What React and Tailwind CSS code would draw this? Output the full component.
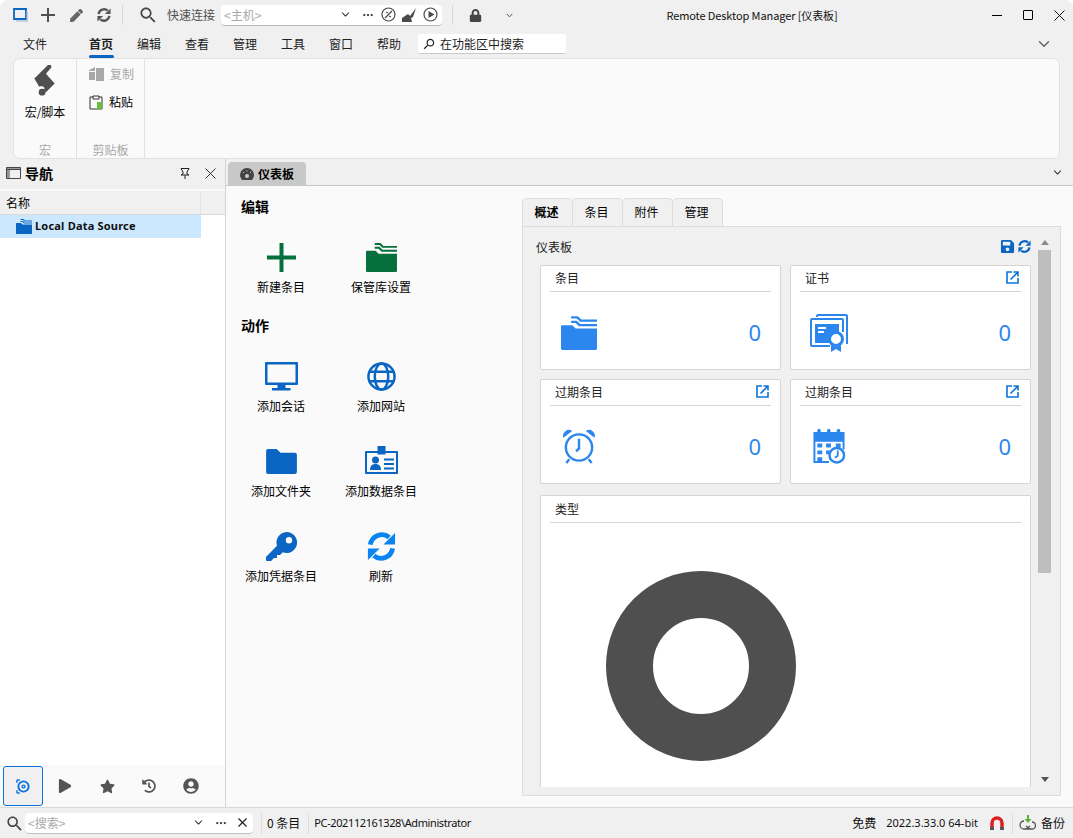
import { FaStar, FaPlay, FaUserCircle, FaHistory, FaLock, FaSave, FaPen } from "react-icons/fa";
import { IoMdSearch } from "react-icons/io";
import { IoChevronDown, IoEllipsisHorizontal } from "react-icons/io5";

const font = "font-['Noto_Sans_CJK_SC','Noto_Sans',sans-serif]";

function VaultFolder({ className }) {
  return (
    <svg viewBox="0 0 32 30" className={className} fill="currentColor">
      <path d="M9 0h6l3 3h14v2H17l-3-3H9z" />
      <path d="M9 4h5l3 3h15v2H16l-3-3H9z" />
      <path d="M1 8h9l3 3h19v18a1 1 0 0 1-1 1H1a1 1 0 0 1-1-1V9a1 1 0 0 1 1-1z" />
    </svg>
  );
}

function RefreshIcon({ className }) {
  return (
    <svg viewBox="0 0 30 30" className={className} fill="currentColor">
      <path d="M3.500 13A12 12 0 0 1 23 5.500" fill="none" stroke="currentColor" strokeWidth="5" />
      <path d="M29 1v12H17z" />
      <path d="M26.500 17A12 12 0 0 1 7 24.500" fill="none" stroke="currentColor" strokeWidth="5" />
      <path d="M1 29V17h12z" />
    </svg>
  );
}

function KeyIcon() {
  return (
    <svg viewBox="0 0 31 29" className="w-[31px] h-[29px] text-[#0a66c2]" fill="currentColor">
      <path
        d="M20.500 0a10.500 10.500 0 1 1-3.700 20.300L14 23h-3v3H8l-3 3H1a1 1 0 0 1-1-1v-3l11-11.300A10.500 10.500 0 0 1 20.500 0zm2.500 5a3.200 3.200 0 1 0 0 6.400A3.200 3.200 0 0 0 23 5z"
        fillRule="evenodd"
      />
    </svg>
  );
}

function Monitor() {
  return (
    <svg viewBox="0 0 33 29" className="w-[33px] h-[29px] text-[#0a66c2]" fill="currentColor">
      <path d="M1 0h31a1 1 0 0 1 1 1v21a1 1 0 0 1-1 1H1a1 1 0 0 1-1-1V1a1 1 0 0 1 1-1zm1.500 2.500v18h28v-18z" fillRule="evenodd" />
      <path d="M12.500 23h8v3h5v2.500H7V26h5.500z" />
    </svg>
  );
}

function Globe() {
  return (
    <svg viewBox="0 0 30 30" className="w-[29px] h-[29px] text-[#0a66c2]" fill="none" stroke="currentColor" strokeWidth="2.600">
      <circle cx="15" cy="15" r="13.500" />
      <ellipse cx="15" cy="15" rx="7" ry="13.500" />
      <path d="M3 10h24M3 20h24" />
    </svg>
  );
}

function Folder() {
  return (
    <svg viewBox="0 0 32 26" className="w-[31px] h-[25px] mb-[2px] text-[#0a66c2]" fill="currentColor">
      <path d="M2 0h9l4 4h15a2 2 0 0 1 2 2v18a2 2 0 0 1-2 2H2a2 2 0 0 1-2-2V2a2 2 0 0 1 2-2z" />
    </svg>
  );
}

function IdCard() {
  return (
    <svg viewBox="0 0 33 28" className="w-[33px] h-[28px] mb-[2px] text-[#0a66c2]" fill="currentColor">
      <path d="M1 5h31a1 1 0 0 1 1 1v21a1 1 0 0 1-1 1H1a1 1 0 0 1-1-1V6a1 1 0 0 1 1-1zm1 2v19h29V7z" fillRule="evenodd" />
      <rect x="12.500" y="0" width="8" height="8.500" />
      <circle cx="10.500" cy="14" r="3.500" />
      <path d="M5 24c0-4 2-6 5.500-6S16 20 16 24z" />
      <path d="M19 12.500h10v2H19zM19 17h10v2H19zM19 21.500h10v2H19z" />
    </svg>
  );
}

function Certificate() {
  return (
    <svg viewBox="0 0 38 38" className="w-[38px] h-[38px] text-[#2b87ee]" fill="currentColor">
      <path d="M6 2a2 2 0 0 1 2-2h28a2 2 0 0 1 2 2v28h-2V2H8v1H6z" />
      <path d="M2 4h30a2 2 0 0 1 2 2v12h-2V6H2v25h18v2H2a2 2 0 0 1-2-2V6a2 2 0 0 1 2-2z" />
      <path d="M5 10h24v8a9 9 0 0 0-9 11H5z" />
      <path d="M8 13h8v2H8zM8 17h6v2H8z" fill="#fff" />
      <circle cx="26" cy="25" r="6.500" fill="none" stroke="currentColor" strokeWidth="3" />
      <path d="M21 31v7l5-3 5 3v-7l-5 2z" />
    </svg>
  );
}

function AlarmClock() {
  return (
    <svg viewBox="0 0 34 36" className="w-[34px] h-[35px] text-[#2b87ee]" fill="none" stroke="currentColor" strokeWidth="2.500">
      <circle cx="17" cy="19" r="13.500" />
      <path d="M17 10v10l-3 3M7 31l-3 4M27 31l3 4" />
      <path d="M1 9a6 6 0 0 1 9-7zM33 9a6 6 0 0 0-9-7z" fill="currentColor" stroke="none" />
    </svg>
  );
}

function CalendarClock() {
  return (
    <svg viewBox="0 0 34 36" className="w-[34px] h-[35px] text-[#2b87ee]" fill="currentColor">
      <path d="M1 3h32v18h-2V13H3v20h14v2H1z" />
      <rect x="5" y="0" width="3.500" height="7" rx="1.500" />
      <rect x="15" y="0" width="3.500" height="7" rx="1.500" />
      <rect x="25" y="0" width="3.500" height="7" rx="1.500" />
      <path d="M5 15h5v4H5zM14 15h5v4h-5zM24 15h5v4h-5zM5 22h5v4H5zM5 29h5v4H5zM14 22h4v4h-4z" />
      <circle cx="25" cy="27" r="7.500" fill="#fff" stroke="currentColor" strokeWidth="2.500" />
      <path d="M26 22v5.500l-3 2" fill="none" stroke="currentColor" strokeWidth="1.800" />
    </svg>
  );
}

function ExternalLink() {
  return (
    <svg viewBox="0 0 13 13" className="w-[13px] h-[13px] text-[#0a74da]" fill="none" stroke="currentColor" strokeWidth="1.600">
      <path d="M6 1H1v11h11V7" />
      <path d="M4.500 8.500 11.500 1.500M7.500 1h4.500v4.500" />
    </svg>
  );
}

function ScrollIcon() {
  return (
    <svg viewBox="0 0 22 32" className="w-[22px] h-[31px] text-[#4f4f4f]" fill="currentColor">
      <path d="M5 9 14 0c2-1 4 0 3.500 2.500L12 9l9 10-9 9-2-2c1-2 0-4-2-4-1 0-2-.5-3 .5L0 14z" />
      <circle cx="8" cy="28" r="3.500" />
    </svg>
  );
}

function ActionItem({ icon, label }) {
  return (
    <div className="h-[85px] flex flex-col items-center">
      <div className="h-[42px] flex items-end justify-center">{icon}</div>
      <span className="mt-[6px] leading-[18px]">{label}</span>
    </div>
  );
}

function StatCard({ title, link, icon }) {
  return (
    <div className="bg-white border border-[#d4d4d4] rounded-[2px] h-[105px] px-[9px]">
      <div className="h-[26px] border-b border-[#d4d4d4] flex items-center justify-between pl-[5px] pr-[2px] pb-[2px] text-[#222]">
        <span>{title}</span>
        {link && <ExternalLink />}
      </div>
      <div className="h-[77px] flex items-center justify-between pl-[10px] pr-[10px] pt-[4px]">
        <div className="w-[38px] flex justify-center">{icon}</div>
        <span className="text-[22px] font-['Noto_Sans',sans-serif] text-[#2b87ee]">0</span>
      </div>
    </div>
  );
}

function RibbonTab({ label, active, className = "" }) {
  return (
    <div className={`w-[48px] h-[28px] flex flex-col items-center justify-center relative ${active ? "font-bold" : ""} ${className}`}>
      <span>{label}</span>
      {active && <span className="absolute bottom-0 w-[25px] h-[3px] bg-[#0a66c2] rounded-[2px]" />}
    </div>
  );
}

function SubTab({ label, active }) {
  return (
    <div className={`w-[51px] h-[28px] pb-[1px] pr-[2px] flex items-center justify-center border border-b-0 border-[#dcdcdc] rounded-t-[5px] -mr-px bg-[#f0f0f0] ${active ? "font-bold" : ""}`}>
      {label}
    </div>
  );
}

function App() {
  return (
    <div className={`w-[1073px] h-[838px] overflow-hidden flex flex-col bg-[#f0f0f0] text-[12px] text-black rounded-t-[8px] ${font}`}>
      <header className="h-[30px] flex items-center flex-shrink-0 pl-[13px] pr-[6px] text-[#4f4f4f]">
        <svg viewBox="0 0 15 14" className="w-[15px] h-[14px] text-[#0a66c2]" fill="none" stroke="currentColor" strokeWidth="1.800">
          <path d="M1 1h12v10H1z" />
          <path d="M3 13h11V3" stroke="#9ab8d8" strokeWidth="1.200" />
        </svg>
        <svg viewBox="0 0 14 14" className="w-[14px] h-[14px] ml-[13px]" fill="currentColor">
          <path d="M6 0h2v6h6v2H8v6H6V8H0V6h6z" />
        </svg>
        <FaPen size={13} className="ml-[15px] text-[#666]" />
        <RefreshIcon className="w-[14px] h-[14px] ml-[14px] text-[#555]" />
        <div className="w-px h-[20px] bg-[#d8d8d8] ml-[11px]" />
        <IoMdSearch size={20} className="ml-[15px] text-[#444]" />
        <span className="ml-[9px]">快速连接</span>
        <div className="ml-[6px] w-[221px] h-[21px] bg-white rounded-[4px] border-b border-[#b8b8b8] flex items-center pl-[3px] pr-[4px] text-[#4a4a4a]">
          <span className="text-[#a8a8a8] flex-1">&lt;主机&gt;</span>
          <IoChevronDown size={11} className="mr-[11px] text-[#333]" />
          <IoEllipsisHorizontal size={12} className="mr-[7px] text-[#333]" />
          <svg viewBox="0 0 15 15" className="w-[15px] h-[15px] mr-[6px]" fill="none" stroke="currentColor" strokeWidth="1.200">
            <circle cx="7.500" cy="7.500" r="6.500" />
            <path d="M4 11 11 4M5 5l2 1M8 9l2 1" />
          </svg>
          <svg viewBox="0 0 15 14" className="w-[15px] h-[14px] mr-[6px]" fill="currentColor">
            <path d="M14 0 8 8 6 6 0 10v4h10l-1-4 2-1z" />
          </svg>
          <svg viewBox="0 0 15 15" className="w-[15px] h-[15px]" fill="currentColor">
            <circle cx="7.500" cy="7.500" r="6.500" fill="none" stroke="currentColor" strokeWidth="1.200" />
            <path d="M5.500 4v7l6-3.500z" />
          </svg>
        </div>
        <div className="w-px h-[20px] bg-[#d8d8d8] ml-[10px]" />
        <FaLock size={13} className="ml-[16px] text-[#444]" />
        <IoChevronDown size={9} className="ml-[23px] text-[#333]" />
        <div className="flex-1 text-center text-[11px] tracking-[-0.1px] text-[#111] pl-[3px]">Remote Desktop Manager [仪表板]</div>
        <div className="w-[80px] flex items-center justify-between pl-[5px] pr-[2px]">
          <span className="w-[10px] h-px bg-black" />
          <span className="w-[10px] h-[10px] border border-black rounded-[1px]" />
          <svg viewBox="0 0 11 11" className="w-[11px] h-[11px]" fill="none" stroke="#111" strokeWidth="1">
            <path d="M.5.500l10 10M10.500.500l-10 10" />
          </svg>
        </div>
      </header>

      <nav className="h-[28px] flex items-center flex-shrink-0 pl-[11px] text-[#222]">
        <RibbonTab label="文件" className="mr-[18px]" />
        <RibbonTab label="首页" active />
        <RibbonTab label="编辑" />
        <RibbonTab label="查看" />
        <RibbonTab label="管理" />
        <RibbonTab label="工具" />
        <RibbonTab label="窗口" />
        <RibbonTab label="帮助" />
        <div className="ml-[5px] w-[148px] h-[20px] bg-white rounded-[3px] border-b border-[#c8c8c8] flex items-center pl-[4px] gap-[4px]">
          <IoMdSearch size={14} className="-scale-x-100" />
          <span>在功能区中搜索</span>
        </div>
        <div className="flex-1 flex justify-end pr-[21px]">
          <IoChevronDown size={16} className="text-[#666]" />
        </div>
      </nav>

      <section className="mx-[13px] h-[101px] flex-shrink-0 bg-[#fafafa] border border-[#e2e2e2] rounded-[7px] flex">
        <div className="w-[63px] border-r border-[#e2e2e2] flex flex-col items-center pt-[6px]">
          <ScrollIcon />
          <span className="mt-[7px] leading-[18px]">宏/脚本</span>
          <span className="mt-auto mb-[-1px] leading-[18px] text-[#a8a8a8]">宏</span>
        </div>
        <div className="w-[68px] border-r border-[#e2e2e2] flex flex-col">
          <div className="flex items-center pl-[12px] mt-[6px] h-[18px] text-[#a8a8a8] gap-[6px]">
            <svg viewBox="0 0 15 14" className="w-[15px] h-[14px]" fill="#a8a8a8">
              <path d="M0 3l6-3v4H0zM7 1h8v13H7zM0 5h6v8H0z" />
            </svg>
            <span>复制</span>
          </div>
          <div className="flex items-center pl-[12px] mt-[10px] h-[18px] gap-[6px]">
            <svg viewBox="0 0 14 15" className="w-[14px] h-[15px]">
              <path d="M4 2H1v12h12V2h-3M4 1h6v3H4z" fill="none" stroke="#333" strokeWidth="1" />
              <rect x="8" y="7" width="5" height="7" fill="#6abf40" />
            </svg>
            <span>粘贴</span>
          </div>
          <span className="mt-auto mb-[-1px] leading-[18px] text-center text-[#a8a8a8]">剪贴板</span>
        </div>
      </section>

      <main className="flex-1 flex min-h-0">
        <aside className="w-[226px] flex-shrink-0 flex flex-col border-r border-[#d4d4d4] bg-[#fafafa]">
          <div className="h-[30px] bg-[#f0f0f0] flex items-center pl-[6px] pr-[9px] pb-[2px] flex-shrink-0">
            <svg viewBox="0 0 15 12" className="w-[15px] h-[12px]" fill="none" stroke="#444" strokeWidth="1">
              <path d="M.5.500h14v11H.5z" />
              <path d="M1 1.500h13v1.500H1z" fill="#444" stroke="none" />
              <path d="M1 3h3v8H1z" fill="#999" stroke="none" />
            </svg>
            <span className="ml-[4px] text-[14px] font-bold flex-1">导航</span>
            <svg viewBox="0 0 10 11" className="w-[10px] h-[11px] mr-[15px]" fill="none" stroke="#222" strokeWidth="1">
              <path d="M1 .500h8L7 4v2l2 1H1l2-1V4zM5 7v4" />
            </svg>
            <svg viewBox="0 0 11 11" className="w-[11px] h-[11px]" fill="none" stroke="#333" strokeWidth="1">
              <path d="M.5.500l10 10M10.500.500l-10 10" />
            </svg>
          </div>
          <div className="h-[2px] bg-[#fafafa]" />
          <div className="h-[24px] bg-[#f0f0f0] border-b border-[#d8d8d8] flex flex-shrink-0">
            <div className="w-[201px] border-r border-[#e6e6e6] pl-[6px] flex items-center">名称</div>
          </div>
          <div className="flex-1 bg-white min-h-0">
            <div className="w-[201px] h-[23px] bg-[#cce8ff] flex items-center pl-[16px] gap-[3px]">
              <VaultFolder className="w-[16px] h-[15px] text-[#0a66c2]" />
              <span className="font-bold text-[11px] tracking-[0.2px] font-['Noto_Sans',sans-serif] text-[#111]">Local Data Source</span>
            </div>
          </div>
          <div className="h-[42px] flex items-center flex-shrink-0 pl-[3px] bg-[#fafafa]">
            <div className="w-[40px] h-[40px] border border-[#0a74da] rounded-[3px] bg-[#f0f0f0] flex items-center justify-center">
              <svg viewBox="0 0 16 16" className="w-[15px] h-[15px]" fill="none" stroke="#0a74da">
                <circle cx="8" cy="8" r="5.500" strokeWidth="2" />
                <circle cx="8" cy="8" r="1.500" strokeWidth="1.500" />
                <path d="M1 1h3M1 1v3M1 15h3M1 15v-3" strokeWidth="1.500" />
              </svg>
            </div>
            <div className="w-[44px] flex justify-center"><FaPlay size={14} className="text-[#555]" /></div>
            <div className="w-[40px] flex justify-center"><FaStar size={15} className="text-[#555]" /></div>
            <div className="w-[44px] flex justify-center"><FaHistory size={14} className="text-[#555]" /></div>
            <div className="w-[40px] flex justify-center"><FaUserCircle size={16} className="text-[#555]" /></div>
          </div>
        </aside>

        <div className="flex-1 flex flex-col min-w-0">
          <div className="h-[27px] flex items-end pl-[2px] pr-[10px] border-b border-[#c8c8c8] flex-shrink-0">
            <div className="w-[78px] h-[23px] bg-[#c8c8c8] rounded-t-[4px] flex items-center justify-center gap-[4px] font-bold text-[12px]">
              <svg viewBox="0 0 14 12" className="w-[14px] h-[12px]" fill="#444">
                <path d="M7 0a7 7 0 0 1 7 7c0 2-1 3.500-2 5H2C1 10.500 0 9 0 7a7 7 0 0 1 7-7z" />
                <circle cx="7" cy="8" r="2" fill="#c8c8c8" />
                <path d="M3 4h1v1H3zM6.500 2.500h1v1h-1zM10 4h1v1h-1z" fill="#c8c8c8" />
              </svg>
              <span>仪表板</span>
            </div>
            <div className="flex-1 flex justify-end self-center">
              <IoChevronDown size={11} className="text-[#333]" />
            </div>
          </div>

          <div className="flex-1 min-h-0 bg-[#fafafa] flex pl-[15px]">
            <div className="w-[281px] flex-shrink-0 pt-[11px]">
              <h2 className="text-[14px] font-bold leading-[18px]">编辑</h2>
              <div className="grid grid-cols-[100px_100px] -ml-[10px] mt-[15px]">
                <ActionItem
                  icon={
                    <svg viewBox="0 0 29 29" className="w-[29px] h-[29px] text-[#05703c]" fill="currentColor">
                      <path d="M12.500 0h4v12.500H29v4H16.500V29h-4V16.500H0v-4h12.500z" />
                    </svg>
                  }
                  label="新建条目"
                />
                <ActionItem icon={<VaultFolder className="w-[31px] h-[29px] text-[#05703c]" />} label="保管库设置" />
              </div>
              <h2 className="text-[14px] font-bold leading-[18px] mt-[1px]">动作</h2>
              <div className="grid grid-cols-[100px_100px] -ml-[10px] mt-[15px]">
                <ActionItem icon={<Monitor />} label="添加会话" />
                <ActionItem icon={<Globe />} label="添加网站" />
                <ActionItem icon={<Folder />} label="添加文件夹" />
                <ActionItem icon={<IdCard />} label="添加数据条目" />
                <ActionItem icon={<KeyIcon />} label="添加凭据条目" />
                <ActionItem icon={<RefreshIcon className="w-[29px] h-[29px] text-[#0a84f0]" />} label="刷新" />
              </div>
            </div>

            <div className="w-[539px] flex-shrink-0 flex flex-col pt-[12px] pb-[11px]">
              <div className="flex flex-shrink-0">
                <SubTab label="概述" active />
                <SubTab label="条目" />
                <SubTab label="附件" />
                <SubTab label="管理" />
              </div>
              <div className="flex-1 min-h-0 border border-[#dcdcdc] bg-[#f0f0f0] flex pl-[13px] pr-[9px] pb-[8px]">
                <div className="flex-1 min-w-0 flex flex-col overflow-hidden pr-[7px]">
                  <div className="h-[38px] flex items-center justify-between flex-shrink-0 pt-[4px] pb-[3px]">
                    <span className="text-[#222]">仪表板</span>
                    <div className="flex items-center gap-[3px]">
                      <FaSave size={15} className="text-[#0a66c2]" />
                      <RefreshIcon className="w-[13px] h-[13px] text-[#0a66c2]" />
                    </div>
                  </div>
                  <div className="ml-[4px] grid grid-cols-2 gap-[9px]">
                    <StatCard title="条目" icon={<VaultFolder className="w-[36px] h-[34px] text-[#2b87ee]" />} />
                    <StatCard title="证书" link icon={<Certificate />} />
                    <StatCard title="过期条目" link icon={<AlarmClock />} />
                    <StatCard title="过期条目" link icon={<CalendarClock />} />
                  </div>
                  <div className="ml-[4px] mt-[11px] bg-white border border-[#d4d4d4] rounded-t-[2px] border-b-0 flex-1 min-h-0 px-[9px]">
                    <div className="h-[27px] border-b border-[#d4d4d4] flex items-center pl-[5px] text-[#222]">类型</div>
                    <div className="pt-[48px] pl-[56px]">
                      <svg viewBox="0 0 190 190" className="w-[190px] h-[190px]">
                        <circle cx="95" cy="95" r="71.500" fill="none" stroke="#4f4f4f" strokeWidth="47" />
                      </svg>
                    </div>
                  </div>
                </div>
                <div className="w-[13px] flex flex-col items-center flex-shrink-0 pt-[13px]">
                  <span className="w-0 h-0 border-x-[4px] border-x-transparent border-b-[5px] border-b-[#888]" />
                  <div className="w-[13px] h-[323px] bg-[#bebebe] mt-[5px]" />
                  <span className="w-0 h-0 mt-auto mb-[5px] border-x-[4px] border-x-transparent border-t-[5px] border-t-[#555]" />
                </div>
              </div>
            </div>
          </div>
        </div>
      </main>

      <footer className="h-[31px] flex items-center flex-shrink-0 border-t border-[#d8d8d8] pl-[5px] pr-[8px] text-[#111]">
        <IoMdSearch size={19} className="text-[#444]" />
        <div className="ml-[1px] w-[228px] h-[21px] bg-white rounded-[4px] border-b border-[#c0c0c0] flex items-center pl-[3px] pr-[6px]">
          <span className="flex-1 text-[#a8a8a8]">&lt;搜索&gt;</span>
          <IoChevronDown size={11} className="mr-[11px] text-[#333]" />
          <IoEllipsisHorizontal size={12} className="mr-[11px] text-[#333]" />
          <svg viewBox="0 0 9 9" className="w-[9px] h-[9px]" fill="none" stroke="#222" strokeWidth="1.200">
            <path d="M.5.500l8 8M8.500.500l-8 8" />
          </svg>
        </div>
        <div className="w-px h-[21px] bg-[#dcdcdc] ml-[8px]" />
        <span className="ml-[5px]">0 条目</span>
        <div className="w-px h-[21px] bg-[#dcdcdc] ml-[8px]" />
        <span className="ml-[5px] text-[11px] tracking-[-0.4px] font-['Noto_Sans',sans-serif]">PC-202112161328\Administrator</span>
        <div className="flex-1" />
        <span>免费</span>
        <span className="ml-[10px] text-[11px] font-['Noto_Sans',sans-serif]">2022.3.33.0 64-bit</span>
        <svg viewBox="0 0 14 14" className="w-[14px] h-[14px] ml-[12px]">
          <path d="M2 14V7a5 5 0 0 1 10 0v7" fill="none" stroke="#e02020" strokeWidth="3.500" />
          <path d="M0 11h4v3H0zM10 11h4v3h-4z" fill="#555" />
        </svg>
        <div className="w-px h-[21px] bg-[#dcdcdc] ml-[8px]" />
        <svg viewBox="0 0 17 16" className="w-[17px] h-[16px] ml-[6px]" fill="none" stroke="#555" strokeWidth="1.300">
          <path d="M5 6a4 4 0 0 0 0 8h8a3.500 3.500 0 0 0 0-7M7 11l4 3M11 11l-4 3" />
          <path d="M8 0v4H5.500L9 8l3.500-4H10V0z" fill="#5cb040" stroke="none" />
        </svg>
        <span className="ml-[5px]">备份</span>
      </footer>
    </div>
  );
}

export default App;
